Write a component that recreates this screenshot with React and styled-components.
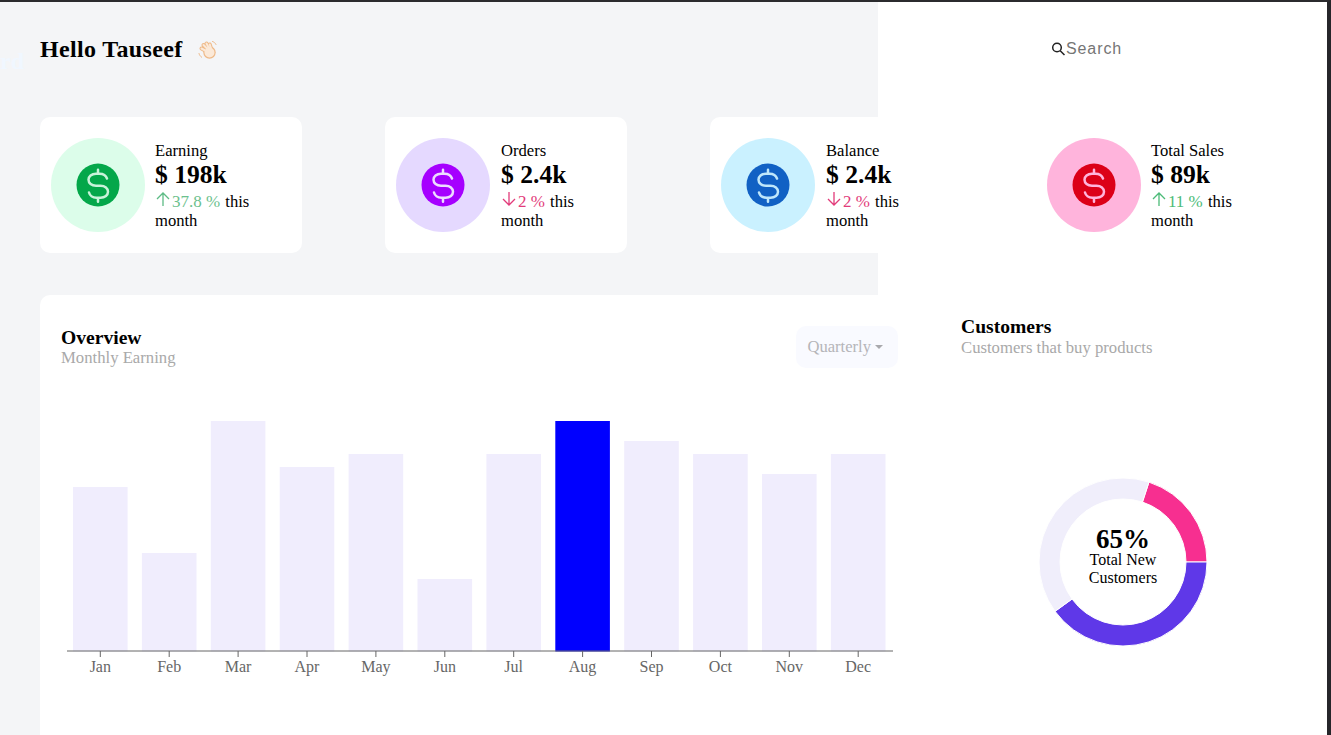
import React from 'react'
import styled, { createGlobalStyle } from 'styled-components'

const GlobalStyle = createGlobalStyle`
  html, body {
    margin: 0;
    padding: 0;
    height: 100%;
    overflow: hidden;
  }
  body {
    font-family: "Liberation Serif", "Times New Roman", serif;
    color: #000;
  }
`

const Page = styled.div`
  display: flex;
  height: 735px;
  box-sizing: border-box;
  border-top: 2px solid #2b2b2e;
  border-right: 4px solid #26262a;
  background: #f4f5f7;
  overflow: hidden;
`

const Rail = styled.div`
  flex: 0 0 40px;
  overflow: hidden;
  display: flex;
  justify-content: flex-end;
  padding: 46px 16px 0 0;
  box-sizing: border-box;
  font-size: 24px;
  font-weight: 700;
  color: #f0f7ff;
  white-space: nowrap;
`

const Main = styled.main`
  flex: 0 0 838px;
  min-width: 0;
  position: relative;
  z-index: 1;
`

const Greeting = styled.h1`
  display: flex;
  align-items: flex-start;
  gap: 15px;
  margin: 0;
  padding-top: 33px;
  height: 115px;
  box-sizing: border-box;
  font-size: 24px;
  line-height: 28px;
  font-weight: 700;
  letter-spacing: 0.35px;
`

const StatRow = styled.section`
  display: flex;
  gap: 83px;
  width: 1238px;
`

const StatCard = styled.article`
  flex: 0 0 ${(p) => p.$width}px;
  height: 136px;
  box-sizing: border-box;
  display: flex;
  align-items: center;
  gap: ${(p) => p.$gap}px;
  padding: 0 11px;
  background: #fff;
  border-radius: 10px;
`

const IconCircle = styled.div`
  flex: 0 0 94px;
  height: 94px;
  border-radius: 50%;
  display: flex;
  align-items: center;
  justify-content: center;
  background: ${(p) => p.$bg};
`

const StatText = styled.div`
  width: 100px;
  font-size: 16.6px;
  line-height: 19px;
`

const StatValue = styled.div`
  padding-top: 1px;
  font-size: 25.6px;
  line-height: 28px;
  font-weight: 700;
  margin-bottom: 2px;
`

const Trend = styled.span`
  margin-right: 1px;
  font-size: 17px;
  color: ${(p) => p.$color};
`

const ArrowWrap = styled.svg`
  margin-right: 1px;
`

const ChartCard = styled.section`
  margin-top: 42px;
  width: 860px;
  height: 500px;
  box-sizing: border-box;
  padding: 32px 0 0 21px;
  background: #fff;
  border-radius: 10px;
`

const ChartHeader = styled.div`
  display: flex;
  justify-content: space-between;
  align-items: flex-start;
  width: 837px;
`

const Title = styled.h2`
  margin: 0;
  font-size: 19.6px;
  line-height: 21px;
  font-weight: 700;
`

const Subtitle = styled.p`
  margin: 0;
  font-size: 16.7px;
  line-height: 19px;
  color: #a9a9a9;
`

const CustomersSubtitle = styled(Subtitle)`
  margin-top: 1px;
`

const PeriodButton = styled.div`
  display: flex;
  align-items: center;
  gap: 4px;
  height: 42px;
  margin-top: -1px;
  padding: 0 15px 0 11px;
  box-sizing: border-box;
  background: #f9faff;
  border-radius: 10px;
  font-size: 16.6px;
  color: #b5b5b9;
`

const Caret = styled.span`
  width: 0;
  height: 0;
  border-left: 4px solid transparent;
  border-right: 4px solid transparent;
  border-top: 4px solid #a9a9ad;
`

const Chart = styled.svg`
  display: block;
  margin: 30px 0 0 -21px;
  overflow: visible;
`

const Aside = styled.aside`
  flex: 1;
  min-width: 0;
  background: #fff;
  padding-left: 83px;
`

const SearchBar = styled.div`
  display: flex;
  align-items: center;
  height: 18px;
  margin: 38px 0 0 90px;
  font-family: "Liberation Sans", Arial, sans-serif;
  font-size: 16px;
  letter-spacing: 0.9px;
  color: #757575;
`

const CustomersBlock = styled.section`
  margin-top: 258px;
`

const Donut = styled.div`
  position: relative;
  width: 170px;
  height: 170px;
  margin: 120px 0 0 77px;
`

const DonutLabel = styled.div`
  position: absolute;
  inset: 0;
  padding-bottom: 10px;
  box-sizing: border-box;
  display: flex;
  flex-direction: column;
  align-items: center;
  justify-content: center;
  font-size: 16px;
  line-height: 18px;
  text-align: center;
`

const DonutValue = styled.div`
  font-size: 27px;
  line-height: 24px;
  font-weight: 700;
`

const WaveSvg = styled.svg`
  flex: none;
  margin-top: 5px;
`

const DollarIcon = ({ bg, fg }) => (
  <svg width="44" height="44" viewBox="0 0 44 44" fill="none">
    <circle cx="22" cy="22" r="21.5" fill={bg} />
    <path
      d="M22 6.700v4M22 34.700v4M31 15.500C30 12.500 27 10.700 23.500 10.700H20C15.500 10.700 12.500 13.500 12.500 16.700C12.500 20 15.500 22.700 20 22.700H24.500C29 22.700 32 25.400 32 28.700C32 32 29 34.700 24.500 34.700H20.500C17 34.700 14 33 13 29.500"
      stroke={fg}
      strokeWidth="2.500"
      strokeLinecap="round"
    />
  </svg>
)

const TrendArrow = ({ up, color }) => (
  <ArrowWrap width="16" height="16" viewBox="0 0 16 16" fill="none" stroke={color} strokeWidth="1.300">
    {up ? <path d="M8 15V2M2 8l6-6 6 6" /> : <path d="M8 1v13M2 8l6 6 6-6" />}
  </ArrowWrap>
)

const fingers = 'M10 12 3.500 8.500M11 10.500 5.500 5M12 10 8.500 3.500M13.500 10 11.800 4.500'

const WaveIcon = () => (
  <WaveSvg width="20" height="20" viewBox="0 0 20 20" fill="none" strokeLinecap="round">
    <path d={fingers} stroke="#eeb988" strokeWidth="4" />
    <circle cx="11.500" cy="12.500" r="6.200" fill="#eeb988" />
    <path d={fingers} stroke="#fbe9d8" strokeWidth="2" />
    <circle cx="11.500" cy="12.500" r="5" fill="#fbe9d8" />
    <path d="M14.500 1.500c1.500.4 2.800 1.500 3.500 3M1 13.500c.4 1.500 1.300 2.800 2.600 3.700" stroke="#eeb988" strokeWidth="1" />
  </WaveSvg>
)

const SearchIcon = () => (
  <svg width="15" height="16" viewBox="0 0 15 16" fill="none" stroke="#222" strokeWidth="1.500">
    <circle cx="6" cy="6.500" r="4.300" />
    <path d="M9.200 9.700 13.500 14" />
  </svg>
)

const stats = [
  { label: 'Earning', value: '$ 198k', up: true, change: '37.8 %', color: '#6cc18e', arrow: '#5dbb85', circle: '#dcfdea', bg: '#04a74a', fg: '#c9f3da', width: 262, gap: 10 },
  { label: 'Orders', value: '$ 2.4k', up: false, change: '2 %', color: '#e23b7a', arrow: '#e23b7a', circle: '#e5d9ff', bg: '#a600ff', fg: '#eddcff', width: 242, gap: 11 },
  { label: 'Balance', value: '$ 2.4k', up: false, change: '2 %', color: '#e23b7a', arrow: '#e23b7a', circle: '#caf1ff', bg: '#1161c4', fg: '#bfe7fb', width: 243, gap: 11 },
  { label: 'Total Sales', value: '$ 89k', up: true, change: '11 %', color: '#4cbb78', arrow: '#4cbb78', circle: '#ffb4dc', bg: '#dc0018', fg: '#ffb4dc', width: 242, gap: 10 },
]

const months = [
  ['Jan', 487], ['Feb', 553], ['Mar', 421], ['Apr', 467], ['May', 454], ['Jun', 579],
  ['Jul', 454], ['Aug', 421], ['Sep', 441], ['Oct', 454], ['Nov', 474], ['Dec', 454],
]

// chart svg starts at x=40, y=398 on the page
const BASE = 253
const TOP_OFFSET = 398

const BarChart = () => (
  <Chart width="860" height="300">
    {months.map(([name, top], i) => {
      const x = 33 + i * 68.900
      return (
        <g key={name}>
          <rect x={x} y={top - TOP_OFFSET} width="54.600" height={651.500 - top} fill={name === 'Aug' ? '#0000ff' : '#f0edfd'} />
          <line x1={x + 27.300} x2={x + 27.300} y1={BASE} y2={BASE + 6} stroke="#666" />
          <text x={x + 27.300} y={BASE + 21} textAnchor="middle" fontSize="16" fill="#666">{name}</text>
        </g>
      )
    })}
    <line x1="27" x2="853" y1={BASE} y2={BASE} stroke="#666" />
  </Chart>
)

// ring segments: start/end in degrees clockwise from 12 o'clock
const ring = [
  { from: 18, to: 90, color: '#f72f90' },
  { from: 90, to: 234, color: '#5f38e8' },
  { from: 234, to: 378, color: '#f0eefb' },
]

const point = (r, deg) => {
  const a = ((deg - 90) * Math.PI) / 180
  return `${85 + r * Math.cos(a)} ${85 + r * Math.sin(a)}`
}

const segment = ({ from, to }) => {
  const large = to - from > 180 ? 1 : 0
  return `M${point(84, from)}A84 84 0 ${large} 1 ${point(84, to)}L${point(63, to)}A63 63 0 ${large} 0 ${point(63, from)}Z`
}

const App = () => (
  <>
    <GlobalStyle />
    <Page>
      <Rail>Dashboard</Rail>
      <Main>
        <Greeting>
          Hello Tauseef
          <WaveIcon />
        </Greeting>
        <StatRow>
          {stats.map((s) => (
            <StatCard key={s.label} $width={s.width} $gap={s.gap}>
              <IconCircle $bg={s.circle}>
                <DollarIcon bg={s.bg} fg={s.fg} />
              </IconCircle>
              <StatText>
                {s.label}
                <StatValue>{s.value}</StatValue>
                <TrendArrow up={s.up} color={s.arrow} />
                <Trend $color={s.color}>{s.change}</Trend> this month
              </StatText>
            </StatCard>
          ))}
        </StatRow>
        <ChartCard>
          <ChartHeader>
            <div>
              <Title>Overview</Title>
              <Subtitle>Monthly Earning</Subtitle>
            </div>
            <PeriodButton>
              Quarterly
              <Caret />
            </PeriodButton>
          </ChartHeader>
          <BarChart />
        </ChartCard>
      </Main>
      <Aside>
        <SearchBar>
          <SearchIcon />
          Search
        </SearchBar>
        <CustomersBlock>
          <Title>Customers</Title>
          <CustomersSubtitle>Customers that buy products</CustomersSubtitle>
          <Donut>
            <svg width="170" height="170" viewBox="0 0 170 170">
              {ring.map((r) => (
                <path key={r.color} d={segment(r)} fill={r.color} stroke="#fff" strokeWidth="1" />
              ))}
            </svg>
            <DonutLabel>
              <DonutValue>65%</DonutValue>
              Total New
              <br />
              Customers
            </DonutLabel>
          </Donut>
        </CustomersBlock>
      </Aside>
    </Page>
  </>
)

export default App
